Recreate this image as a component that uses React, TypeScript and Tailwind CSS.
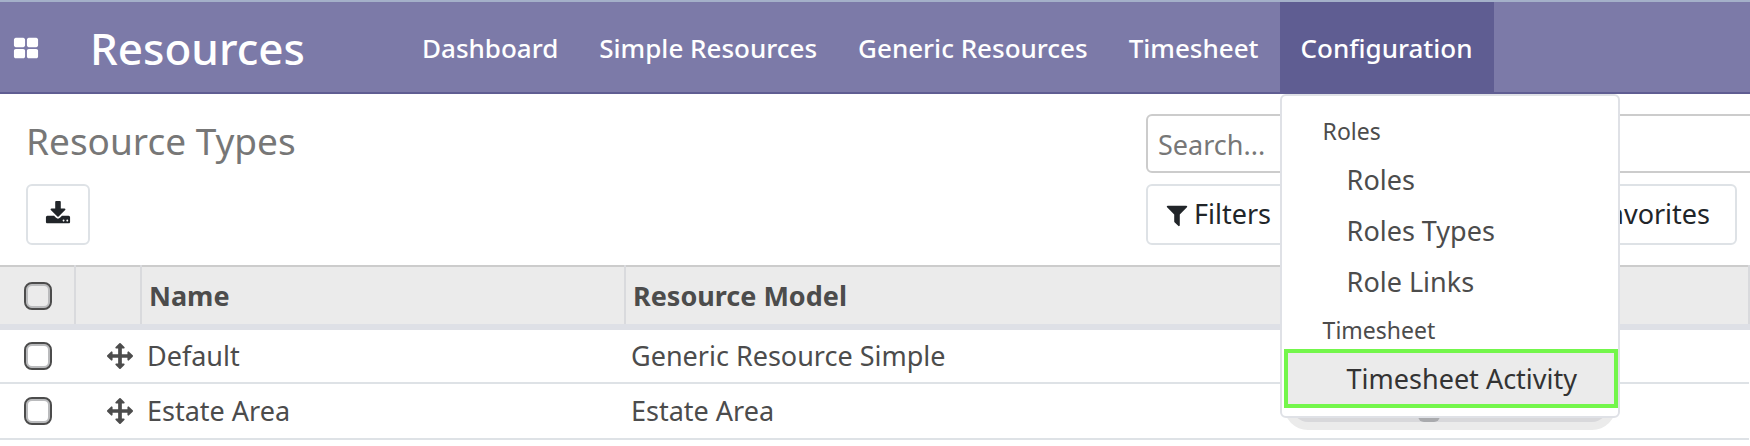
import type { ReactNode } from "react";

const ICONS = {
  apps: "M832 1024v384q0 52-38 90t-90 38h-512q-52 0-90-38t-38-90v-384q0-52 38-90t90-38h512q52 0 90 38t38 90zm0-768v384q0 52-38 90t-90 38h-512q-52 0-90-38t-38-90v-384q0-52 38-90t90-38h512q52 0 90 38t38 90zm896 768v384q0 52-38 90t-90 38h-512q-52 0-90-38t-38-90v-384q0-52 38-90t90-38h512q52 0 90 38t38 90zm0-768v384q0 52-38 90t-90 38h-512q-52 0-90-38t-38-90v-384q0-52 38-90t90-38h512q52 0 90 38t38 90z",
  download:
    "M1344 1344q0-26-19-45t-45-19-45 19-19 45 19 45 45 19 45-19 19-45zm256 0q0-26-19-45t-45-19-45 19-19 45 19 45 45 19 45-19 19-45zm128-224v320q0 40-28 68t-68 28h-1472q-40 0-68-28t-28-68v-320q0-40 28-68t68-28h465l135 136q58 56 136 56t136-56l136-136h464q40 0 68 28t28 68zm-325-569q17 41-14 70l-448 448q-18 19-45 19t-45-19l-448-448q-31-29-14-70 17-39 59-39h256v-448q0-26 19-45t45-19h256q26 0 45 19t19 45v448h256q42 0 59 39z",
  filter:
    "M1595 295q17 41-14 70l-493 493v742q0 42-39 59-13 5-25 5-27 0-45-19l-256-256q-19-19-19-45v-486l-493-493q-31-29-14-70 17-39 59-39h1280q42 0 59 39z",
  move: "M1792 896q0 26-19 45l-256 256q-19 19-45 19t-45-19-19-45v-128h-384v384h128q26 0 45 19t19 45-19 45l-256 256q-19 19-45 19t-45-19l-256-256q-19-19-19-45t19-45 45-19h128v-384h-384v128q0 26-19 45t-45 19-45-19l-256-256q-19-19-19-45t19-45l256-256q19-19 45-19t45 19 19 45v128h384v-384h-128q-26 0-45-19t-19-45 19-45l256-256q19-19 45-19t45 19l256 256q19 19 19 45t-19 45-45 19h-128v384h384v-128q0-26 19-45t45-19 45 19l256 256q19 19 19 45z",
};

const NAV_ITEMS = ["Dashboard", "Simple Resources", "Generic Resources", "Timesheet"];

const ROWS = [
  { name: "Default", model: "Generic Resource Simple" },
  { name: "Estate Area", model: "Estate Area" },
];

function Icon({ name, className = "" }: { name: keyof typeof ICONS; className?: string }) {
  return (
    <svg
      viewBox="0 0 1792 1792"
      fill="currentColor"
      aria-hidden="true"
      className={`h-[26px] w-[26px] shrink-0 ${className}`}
    >
      <path d={ICONS[name]} />
    </svg>
  );
}

function Checkbox({ label }: { label: string }) {
  return (
    <input
      type="checkbox"
      aria-label={label}
      className="block h-7 w-7 appearance-none rounded-lg border-2 border-[#4c4c4c] shadow-[inset_0_0_0_2px_#babbbd]"
    />
  );
}

function MenuHeader({ children }: { children: ReactNode }) {
  return <h2 className="px-[41px] pt-1 text-[23px] leading-[38px]">{children}</h2>;
}

function MenuItem({ children }: { children: ReactNode }) {
  return (
    <a href="#" className="block pr-8 pl-[65px] text-[27px] leading-[51px]">
      {children}
    </a>
  );
}

function ConfigurationMenu() {
  return (
    <div className="absolute top-full left-0 z-10 mt-[2px] w-[340px]">
      <div className="absolute inset-x-1 -bottom-3 h-12 rounded-[32px] bg-[#ebebeb]" />
      <div className="absolute inset-x-3 -bottom-1 h-8 rounded-[24px] bg-[#d8d8db]" />
      <div className="absolute -bottom-1 left-[138px] h-4 w-[22px] rounded-md bg-[#a9aaad]" />
      <div className="relative rounded-md border-2 border-[#dfe1e6] bg-white pt-3 pb-2 text-[#4c4c4c]">
        <MenuHeader>Roles</MenuHeader>
        <div className="pt-1">
          <MenuItem>Roles</MenuItem>
          <MenuItem>Roles Types</MenuItem>
          <MenuItem>Role Links</MenuItem>
        </div>
        <MenuHeader>Timesheet</MenuHeader>
        <div className="ml-[2px] border-4 border-[#73f64b] bg-[#ebebeb]">
          <a href="#" className="block pl-[59px] text-[27px] leading-[51px] text-[#333]">
            Timesheet Activity
          </a>
        </div>
      </div>
    </div>
  );
}

function NavBar() {
  return (
    <header className="flex h-[94px] border-t-2 border-b-2 border-t-[#a4b0c9] border-b-[#5f5d92] bg-[#7c7aa8] text-white">
      <button type="button" aria-label="Applications" className="w-[52px] shrink-0 pt-1 pl-[13px]">
        <Icon name="apps" />
      </button>
      <a href="#" className="flex w-[350px] shrink-0 items-center pt-[2px] pl-[38px] text-[44px] font-medium">
        Resources
      </a>
      <nav className="flex gap-px text-[26px] font-medium whitespace-nowrap">
        {NAV_ITEMS.map((item) => (
          <a key={item} href="#" className="flex items-center px-5 pt-[2px]">
            {item}
          </a>
        ))}
        <div className="relative flex">
          <button type="button" aria-expanded="true" className="bg-[#5f5d92] px-[21px] pt-[2px] font-medium">
            Configuration
          </button>
          <div className="font-normal">
            <ConfigurationMenu />
          </div>
        </div>
      </nav>
    </header>
  );
}

function ControlPanel() {
  return (
    <section className="flex justify-between pt-5 pb-5 pl-[26px]">
      <div>
        <h1 className="text-[37px] leading-[54px] text-[#777]">Resource Types</h1>
        <button
          type="button"
          aria-label="Export"
          className="mt-4 flex h-[61px] w-16 items-center justify-center rounded-md border-2 border-[#dee2e6] pb-[2px] text-[#212529]"
        >
          <Icon name="download" />
        </button>
      </div>
      <div className="w-[604px]">
        <input
          type="search"
          aria-label="Search"
          placeholder="Search..."
          className="block h-[59px] w-[620px] rounded-md border-2 border-[#ccc] px-[10px] pt-[2px] text-[27px] placeholder:text-[#777]"
        />
        <div className="mt-[11px] mr-[13px] flex justify-between text-[27px] text-[#212529]">
          <button
            type="button"
            className="flex h-[61px] items-center gap-1 rounded-md border-2 border-[#dee2e6] px-4"
          >
            <Icon name="filter" />
            Filters
          </button>
          <button
            type="button"
            className="h-[61px] rounded-md border-2 border-[#dee2e6] pr-[25px] pl-12"
          >
            Favorites
          </button>
        </div>
      </div>
    </section>
  );
}

function ResourceTable() {
  return (
    <table className="w-full table-fixed border-collapse border-t-2 border-[#ccc] text-left text-[27px] leading-9 text-[#4c4c4c]">
      <colgroup>
        <col className="w-[75px]" />
        <col className="w-[66px]" />
        <col className="w-[484px]" />
        <col />
      </colgroup>
      <thead>
        <tr className="h-[61px] border-b-[6px] border-[#dee0e6] bg-[#ebebeb]">
          <th className="border-r-2 border-[#d9dadd] pl-6">
            <Checkbox label="Select all" />
          </th>
          <th className="border-r-2 border-[#d9dadd]" />
          <th className="border-r-2 border-[#d9dadd] pl-[7px] font-bold">Name</th>
          <th className="border-r-2 border-[#d9dadd] pl-[7px] font-bold">Resource Model</th>
        </tr>
      </thead>
      <tbody>
        {ROWS.map((row) => (
          <tr key={row.name} className="h-14 border-b-2 border-[#dee2e6]">
            <td className="pl-6">
              <Checkbox label={`Select ${row.name}`} />
            </td>
            <td className="pl-8">
              <Icon name="move" />
            </td>
            <td className="pl-[6px]">{row.name}</td>
            <td className="pl-[6px]">{row.model}</td>
          </tr>
        ))}
      </tbody>
    </table>
  );
}

export default function App() {
  return (
    <div className="overflow-hidden bg-white font-['Noto_Sans',sans-serif]">
      <NavBar />
      <main>
        <ControlPanel />
        <ResourceTable />
      </main>
    </div>
  );
}
